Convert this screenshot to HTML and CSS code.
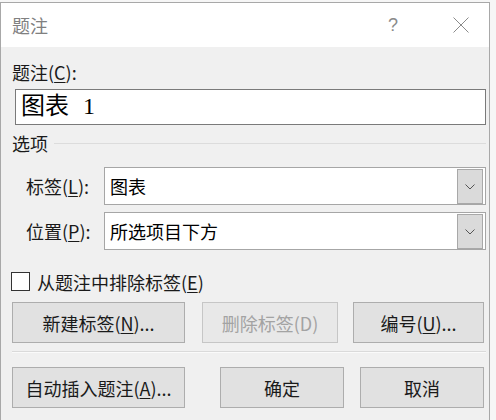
FILE: index.html
```html
<!DOCTYPE html>
<html lang="zh-CN">
<head>
<meta charset="utf-8">
<title>题注</title>
<link rel="stylesheet" href="styles.css">
</head>
<body>
<div class="dialog">
  <div class="titlebar">
    <span class="title">题注</span>
    <span class="help">?</span>
    <span class="close">
      <svg width="16" height="16" viewBox="0 0 16 16"><path d="M0.5 0.5 L15.5 15.5 M15.5 0.5 L0.5 15.5" stroke="#8a8a8a" stroke-width="1" fill="none"/></svg>
    </span>
  </div>
  <div class="content">
    <div class="label">题注(<u>C</u>):</div>
    <div class="textbox">图表 1</div>
    <div class="group">
      <span class="group-title">选项</span>
      <span class="group-line"></span>
    </div>
    <div class="field">
      <span class="field-label">标签(<u>L</u>):</span>
      <div class="combo">
        <span class="combo-text">图表</span>
        <span class="combo-btn"><svg width="10" height="6" viewBox="0 0 10 6"><path d="M0.5 0.5 L5 5 L9.5 0.5" stroke="#555" stroke-width="1" fill="none"/></svg></span>
      </div>
    </div>
    <div class="field second">
      <span class="field-label">位置(<u>P</u>):</span>
      <div class="combo">
        <span class="combo-text">所选项目下方</span>
        <span class="combo-btn"><svg width="10" height="6" viewBox="0 0 10 6"><path d="M0.5 0.5 L5 5 L9.5 0.5" stroke="#555" stroke-width="1" fill="none"/></svg></span>
      </div>
    </div>
    <div class="check-row">
      <span class="checkbox"></span>
      <span class="check-label">从题注中排除标签(<u>E</u>)</span>
    </div>
    <div class="btn-row row1">
      <button class="btn b-new">新建标签(<u>N</u>)...</button>
      <button class="btn b-del disabled">删除标签(D)</button>
      <button class="btn b-num">编号(<u>U</u>)...</button>
    </div>
    <div class="separator"></div>
    <div class="btn-row row2">
      <button class="btn b-auto">自动插入题注(<u>A</u>)...</button>
      <button class="btn b-ok">确定</button>
      <button class="btn b-cancel">取消</button>
    </div>
  </div>
</div>
</body>
</html>
```
FILE: styles.css
```css
* { box-sizing: border-box; }
html, body {
  margin: 0;
  padding: 0;
  width: 496px;
  height: 420px;
  overflow: hidden;
  background: #f6f6f6;
  font-family: "Noto Sans CJK SC", "Microsoft YaHei", sans-serif;
}
.dialog {
  margin-top: 2px;
  width: 490px;
  height: 420px;
  border: 1px solid #a8a8a8;
  border-bottom: none;
  background: #f0f0f0;
}
.titlebar {
  height: 44px;
  background: #ffffff;
  display: flex;
  align-items: center;
  position: relative;
}
.title {
  margin-left: 11px;
  font-size: 18px;
  line-height: 24px;
  color: #808080;
}
.help {
  position: absolute;
  left: 387px;
  top: 10px;
  font-size: 18px;
  line-height: 24px;
  color: #8a8a8a;
  font-family: "Liberation Sans", sans-serif;
}
.close {
  position: absolute;
  left: 452px;
  top: 14px;
  width: 16px;
  height: 16px;
  display: block;
}
.close svg { display: block; }
.content {
  padding: 13px 3px 0 11px;
  display: flex;
  flex-direction: column;
}
.label {
  font-size: 18px;
  line-height: 24px;
  color: #1a1a1a;
}
u { text-decoration: underline; text-underline-offset: 2px; text-decoration-thickness: 1px; }
.textbox {
  margin-top: 5px;
  margin-left: 3px;
  height: 36px;
  border: 1px solid #7a7a7a;
  background: #ffffff;
  font-family: "Liberation Serif", "Noto Sans CJK SC", serif;
  font-size: 24px;
  line-height: 33px;
  word-spacing: 8px;
  padding-left: 5px;
  color: #000;
}
.group {
  margin-top: 6px;
  height: 24px;
  display: flex;
  align-items: center;
}
.group-title {
  font-size: 18px;
  line-height: 24px;
  color: #1a1a1a;
}
.group-line {
  flex: 1;
  height: 1px;
  background: #dcdcdc;
  margin-left: 6px;
}
.field {
  margin-top: 12px;
  display: flex;
  align-items: center;
  height: 38px;
}
.field.second { margin-top: 7px; }
.field-label {
  width: 92px;
  padding-left: 14px;
  font-size: 18px;
  line-height: 24px;
  color: #1a1a1a;
}
.combo {
  flex: 1;
  height: 38px;
  border: 1px solid #a6a6a6;
  background: #ffffff;
  display: flex;
  align-items: stretch;
  padding: 1px 2px 0 0;
}
.combo-text {
  flex: 1;
  padding-left: 5px;
  font-size: 18px;
  line-height: 34px;
  color: #000;
}
.combo-btn {
  width: 26px;
  height: 35px;
  border: 1px solid #a8a8a8;
  background: #dadada;
  display: flex;
  align-items: center;
  justify-content: center;
}
.combo-btn svg { display: block; }
.check-row {
  margin-top: 22px;
  display: flex;
  align-items: center;
  height: 19px;
}
.checkbox {
  width: 19px;
  height: 19px;
  border: 1px solid #333333;
  background: #ffffff;
  margin-left: -1px;
}
.check-label {
  margin-left: 7px;
  font-size: 18px;
  line-height: 24px;
  color: #1a1a1a;
}
.btn-row {
  display: flex;
  height: 41px;
}
.row1 { margin-top: 11px; }
.row2 { margin-top: 14px; }
.btn {
  height: 41px;
  border: 1px solid #adadad;
  background: #e1e1e1;
  font-family: "Noto Sans CJK SC", "Microsoft YaHei", sans-serif;
  font-size: 18px;
  line-height: 24px;
  color: #1a1a1a;
  padding: 0;
  margin: 0;
}
.btn.disabled {
  color: #a3a3a3;
  border-color: #c6c6c6;
  background: #e8e8e8;
}
.b-new { width: 173px; }
.b-del { width: 136px; margin-left: 17px; }
.b-num { width: 131px; margin-left: 15px; }
.b-auto { width: 173px; }
.b-ok { width: 124px; margin-left: 35px; }
.b-cancel { width: 124px; margin-left: 16px; }
.separator {
  margin-top: 8px;
  height: 2px;
  border-top: 1px solid #dadada;
  border-bottom: 1px solid #fafafa;
}
```
